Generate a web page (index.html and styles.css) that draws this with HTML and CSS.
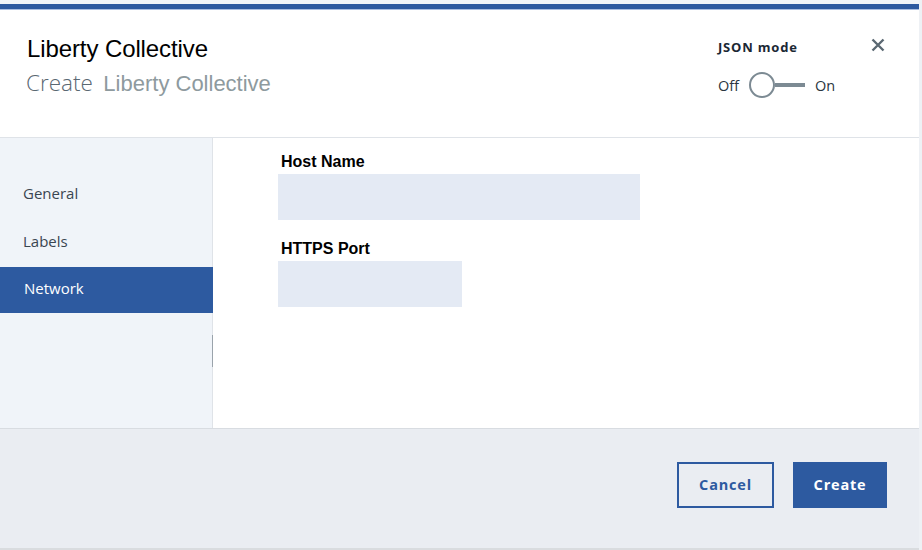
FILE: index.html
```html
<!DOCTYPE html>
<html>
<head>
<meta charset="utf-8">
<link rel="stylesheet" href="styles.css">
</head>
<body>
<div class="modal">
  <div class="topstrip"></div>
  <div class="topbar"></div>
  <header class="header">
    <div class="titles">
      <h1 class="title">Liberty Collective</h1>
      <div class="subtitle"><span class="verb">Create</span> <span class="noun">Liberty Collective</span></div>
    </div>
    <div class="json">
      <div class="json-label">JSON mode</div>
      <div class="toggle">
        <span class="tlabel">Off</span>
        <span class="switch"><span class="knob"></span><span class="track"></span></span>
        <span class="tlabel">On</span>
      </div>
    </div>
    <button class="close" aria-label="Close">
      <svg width="14" height="14" viewBox="0 0 14 14"><path d="M1.5 1.5 L12.5 12.5 M12.5 1.5 L1.5 12.5" stroke="#5a6872" stroke-width="2.4" fill="none"/></svg>
    </button>
  </header>
  <div class="body">
    <nav class="nav">
      <div class="nav-item">General</div>
      <div class="nav-item">Labels</div>
      <div class="nav-item active">Network</div>
      <div class="scrollthumb"></div>
    </nav>
    <main class="content">
      <label class="field">
        <span class="flabel">Host Name</span>
        <span class="input wide"></span>
      </label>
      <label class="field">
        <span class="flabel">HTTPS Port</span>
        <span class="input narrow"></span>
      </label>
    </main>
  </div>
  <footer class="footer">
    <button class="btn secondary">Cancel</button>
    <button class="btn primary">Create</button>
  </footer>
</div>
</body>
</html>
```
FILE: styles.css
```css
html, body {
  margin: 0;
  padding: 0;
  background: #ffffff;
}
.modal {
  width: 922px;
  height: 550px;
  display: flex;
  flex-direction: column;
  overflow: hidden;
  border-right: 3px solid #eef1f5;
  box-sizing: border-box;
  font-family: "Liberation Sans", Arial, sans-serif;
}
.topstrip {
  height: 4px;
  background: #f1f4f8;
  flex: none;
}
.topbar {
  height: 5px;
  background: #2d5aa0;
  border-bottom: 1px solid #a9bde0;
  flex: none;
}
.header {
  height: 128px;
  flex: none;
  display: flex;
  align-items: flex-start;
  border-bottom: 1px solid #dfe3e8;
  background: #fff;
  box-sizing: border-box;
}
.titles {
  flex: 1;
  padding: 24px 0 0 27px;
}
.title {
  margin: 0;
  font-weight: 400;
  font-size: 24px;
  line-height: 30px;
  color: #000;
  letter-spacing: -0.1px;
}
.subtitle {
  margin-top: 5px;
  line-height: 28px;
  margin-left: -1px;
}
.verb {
  font-family: "Open Sans", sans-serif;
  font-weight: 300;
  color: #5a6872;
  font-size: 22.5px;
  margin-right: 6px;
}
.noun {
  color: #8e9a9e;
  font-size: 22px;
}
.json {
  padding-top: 29px;
  width: 150px;
}
.json-label {
  font-family: "Open Sans", sans-serif;
  font-weight: 700;
  font-size: 13px;
  letter-spacing: 0.8px;
  color: #1b2834;
  line-height: 17px;
}
.toggle {
  margin-top: 16px;
  display: flex;
  align-items: center;
  gap: 10px;
  font-family: "Open Sans", sans-serif;
  font-size: 14.5px;
  color: #2a3540;
}
.switch {
  display: flex;
  align-items: center;
  width: 56px;
}
.knob {
  width: 26px;
  height: 26px;
  border: 2px solid #7c8a93;
  border-radius: 50%;
  box-sizing: border-box;
  background: #fff;
  flex: none;
}
.track {
  flex: 1;
  height: 4px;
  background: #7c8a93;
}
.close {
  border: none;
  background: none;
  padding: 0;
  margin: 27px 33px 0 2px;
  width: 16px;
  height: 16px;
  display: flex;
  align-items: center;
  justify-content: center;
}
.body {
  flex: 1;
  display: flex;
  min-height: 0;
}
.nav {
  width: 212px;
  flex: none;
  background: #f0f4f9;
  border-right: 1px solid #dfe3e8;
  padding-top: 31px;
  position: relative;
}
.nav-item {
  height: 48px;
  line-height: 48px;
  padding-left: 23px;
  font-family: "Open Sans", sans-serif;
  font-size: 15px;
  color: #3a4651;
}
.nav-item.active {
  margin-top: 2px;
  height: 46px;
  line-height: 43px;
  background: #2d5aa0;
  color: #fff;
  padding-left: 24px;
  margin-right: -1px;
}
.scrollthumb {
  position: absolute;
  right: -1px;
  top: 197px;
  width: 1px;
  height: 32px;
  background: #9aa3ab;
}
.content {
  flex: 1;
  padding: 15px 0 0 65px;
  display: flex;
  flex-direction: column;
  gap: 20px;
}
.field {
  display: flex;
  flex-direction: column;
}
.flabel {
  font-weight: 700;
  font-size: 16px;
  line-height: 18px;
  color: #000;
  padding-left: 3px;
  margin-bottom: 3px;
}
.input {
  display: block;
  height: 46px;
  background: #e4eaf4;
}
.wide { width: 362px; }
.narrow { width: 184px; }
.footer {
  height: 122px;
  flex: none;
  background: #eaedf2;
  border-top: 1px solid #d8dce1;
  border-bottom: 2px solid #d9dcdf;
  display: flex;
  justify-content: flex-end;
  align-items: flex-start;
  padding: 33px 32px 0 0;
  gap: 19px;
  box-sizing: border-box;
}
.btn {
  height: 46px;
  font-family: "Open Sans", sans-serif;
  font-weight: 700;
  font-size: 14.5px;
  letter-spacing: 0.8px;
  line-height: 1;
  padding: 1px 0 0;
  box-sizing: border-box;
  cursor: pointer;
}
.secondary {
  width: 97px;
  background: transparent;
  border: 2px solid #2d5aa0;
  color: #2d5aa0;
}
.primary {
  width: 94px;
  background: #2d5aa0;
  border: none;
  color: #fff;
}
```
